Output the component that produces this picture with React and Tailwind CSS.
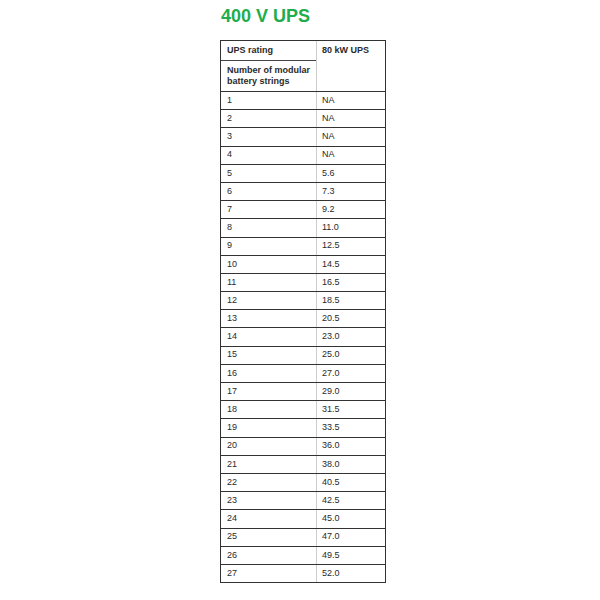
const rows = [
  ['1', 'NA'], ['2', 'NA'], ['3', 'NA'], ['4', 'NA'], ['5', '5.6'], ['6', '7.3'],
  ['7', '9.2'], ['8', '11.0'], ['9', '12.5'], ['10', '14.5'], ['11', '16.5'],
  ['12', '18.5'], ['13', '20.5'], ['14', '23.0'], ['15', '25.0'], ['16', '27.0'],
  ['17', '29.0'], ['18', '31.5'], ['19', '33.5'], ['20', '36.0'], ['21', '38.0'],
  ['22', '40.5'], ['23', '42.5'], ['24', '45.0'], ['25', '47.0'], ['26', '49.5'],
  ['27', '52.0'],
];

export default function App() {
  return (
    <div className="w-[600px] h-[600px] bg-white font-['Liberation_Sans',Arial,sans-serif]">
      <div className="pl-[220px] pt-[5px]">
        <h1 className="text-[18px] leading-[22px] font-bold text-[#21ad4d] pl-[1px]">400 V UPS</h1>

        <div className="mt-[13px] w-[166px] border-x border-[#333] text-[9px] text-[#2a2a2a]">
          {/* Header */}
          <div className="flex border-t border-[#333]">
            <div className="w-[96px] border-r border-[#ccc]">
              <div className="h-[20px] pl-[6px] pt-[3px] font-bold border-b border-[#444]">UPS rating</div>
              <div className="h-[30px] pl-[6px] pt-[4px] font-bold leading-[11px]">
                Number of modular<br />battery strings
              </div>
            </div>
            <div className="flex-1 pl-[5px] pt-[3px] font-bold">80 kW UPS</div>
          </div>

          {/* Body */}
          {rows.map(([n, v]) => (
            <div key={n} className="flex h-[18.2px] border-t border-[#333] items-center">
              <div className="w-[96px] h-full flex items-center pl-[6px] border-r border-[#ccc]">{n}</div>
              <div className="flex-1 pl-[5px]">{v}</div>
            </div>
          ))}
          <div className="border-t border-[#333]" />
        </div>
      </div>
    </div>
  );
}
